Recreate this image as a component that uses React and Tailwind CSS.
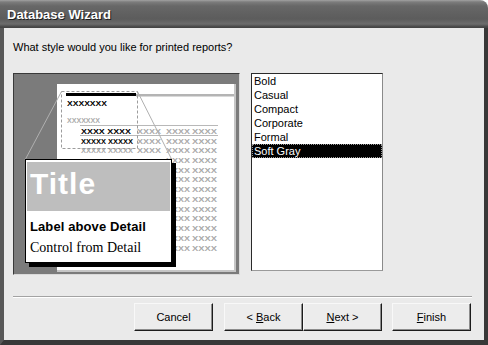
import React from 'react';

const STYLES = ['Bold', 'Casual', 'Compact', 'Corporate', 'Formal', 'Soft Gray'];
const COLS = [
  [123, 24],
  [152, 24],
  [178, 25],
];

// miniature report page behind the zoomed label box
const ReportPreview = () => {
  const rows = [];
  for (let k = 0; k < 11; k++) rows.push(150.5 - 74 + k * 9.75 + 2.7);
  const X = { fontFamily: "'Liberation Sans', Arial, sans-serif", fontWeight: 700, fontSize: 7.5 };

  const grayCols = (y, from = 0) =>
    COLS.slice(from).map(([x, w]) => (
      <text key={x} x={x} y={y} textLength={w} lengthAdjust="spacingAndGlyphs" fill="#a9a9a9" style={X}>
        XXXX
      </text>
    ));

  return (
    <svg className="absolute inset-0" width="225" height="200" viewBox="0 0 225 200">
      <rect x="43" y="10" width="178" height="186" fill="#fff" />
      <line x1="221" y1="10" x2="221" y2="197" stroke="#c6c6c6" strokeWidth="2" />
      <line x1="43" y1="197" x2="222" y2="197" stroke="#c6c6c6" strokeWidth="2" />

      <rect x="122" y="20" width="98" height="2.5" fill="#b4b4b4" />
      <rect x="52" y="19" width="70" height="3" fill="#000" />

      <text x="53" y="31.7" textLength="40" lengthAdjust="spacingAndGlyphs" style={X}>XXXXXXX</text>
      <text x="53" y="48.7" textLength="33" lengthAdjust="spacingAndGlyphs" fill="#ababab" style={X}>XXXXXXX</text>

      <line x1="66" y1="51.5" x2="204" y2="51.5" stroke="#b8b8b8" />
      <text x="67" y="59.7" textLength="50" lengthAdjust="spacingAndGlyphs" style={X}>XXXX XXXX</text>
      {grayCols(59.7)}
      <line x1="66" y1="61.5" x2="204" y2="61.5" stroke="#b8b8b8" />
      <text x="67" y="69.7" textLength="52" lengthAdjust="spacingAndGlyphs" style={X}>XXXXX XXXXX</text>
      {grayCols(69.7)}

      {rows.map((y, k) =>
        k === 0 ? (
          <g key={y}>
            <text x="67" y={y} textLength="52" lengthAdjust="spacingAndGlyphs" fill="#a9a9a9" style={X}>
              XXXXX XXXXX
            </text>
            {grayCols(y)}
          </g>
        ) : (
          // the rest of the row is hidden under the label box
          <g key={y}>{grayCols(y, 1)}</g>
        )
      )}

      <rect x="47.5" y="17.5" width="76" height="57" fill="none" stroke="#9c9c9c" strokeDasharray="3 2" />
      <line x1="47.5" y1="17.5" x2="11" y2="86" stroke="#b0b0b0" />
      <line x1="123.5" y1="17.5" x2="158" y2="86" stroke="#b0b0b0" />
    </svg>
  );
};

const Button = ({ children, className = '' }) => (
  <button
    className={`w-[79px] h-[28px] bg-[#ececec] border border-t-[#f8f8f8] border-l-[#f8f8f8] border-r-[#1c1c1c] border-b-[#1c1c1c] shadow-[inset_-1px_-1px_0_#8c8c8c] text-[11px] text-black ${className}`}
  >
    {children}
  </button>
);

export default function App() {
  return (
    <div className="w-[488px] h-[345px] flex flex-col bg-white font-['Liberation_Sans',Arial,sans-serif] text-[11px] text-black select-none">
      {/* title bar */}
      <div className="h-[28px] shrink-0 flex items-center pl-[7px] pt-[2px] rounded-tr-[8px] bg-[linear-gradient(to_bottom,#a2a2a2_0px,#7c7c7c_2px,#676767_6px,#5c5c5c_19px,#6c6c6c_24px,#454545_27px)]">
        <span className="text-white font-bold text-[13px] [text-shadow:1px_1px_0_#1e1e1e]">Database Wizard</span>
      </div>

      <div className="flex-1 flex flex-col border-l-4 border-r-4 border-b-[5px] border-l-[#585858] border-r-[#383838] border-b-[#383838] bg-[#eaeaea] pl-[9px] pr-[12px] pt-[12px]">
        <p className="leading-[14px]">What style would you like for printed reports?</p>

        <div className="mt-[19px] flex items-start">
          <div className="relative w-[227px] h-[202px] bg-[#7b7b7b] border border-t-[#3a3a3a] border-l-[#3a3a3a] border-r-[#dadada] border-b-[#dadada]">
            <ReportPreview />
            <div className="absolute left-[11px] top-[85px] w-[147px] h-[104px] bg-white border border-black shadow-[4px_4px_0_#000] px-[1px] pt-[2px]">
              <div className="h-[49px] bg-[#bebebe] pl-[3px] pt-[7px]">
                <span className="block text-white font-bold text-[30px] leading-[29px] tracking-[1px]">Title</span>
              </div>
              <div className="mt-[8px] pl-[3px] font-bold text-[13px] leading-[16px] tracking-[0.1px]">Label above Detail</div>
              <div className="mt-[5px] pl-[3px] font-['Liberation_Serif','Times_New_Roman',serif] text-[14px] leading-[16px]">
                Control from Detail
              </div>
            </div>
          </div>

          <ul className="ml-[11px] w-[132px] h-[198px] bg-white border border-t-[#2a2a2a] border-l-[#2a2a2a] border-r-[#8a8a8a] border-b-[#9a9a9a]">
            {STYLES.map((s) => (
              <li
                key={s}
                className={`h-[14px] leading-[14px] pl-[2px] ${
                  s === 'Soft Gray' ? 'bg-black text-white outline-1 outline-dotted outline-[#9a9a9a] -outline-offset-1' : ''
                }`}
              >
                {s}
              </li>
            ))}
          </ul>
        </div>

        <div className="mt-[21px] h-[2px] border-t border-t-[#a3a3a3] border-b border-b-white" />

        <div className="mt-[5px] flex justify-end pr-[1px]">
          <Button>Cancel</Button>
          <Button className="ml-[11px]">
            &lt; <span className="underline">B</span>ack
          </Button>
          <Button>
            <span className="underline">N</span>ext &gt;
          </Button>
          <Button className="ml-[10px]">
            <span className="underline">F</span>inish
          </Button>
        </div>
      </div>
    </div>
  );
}
